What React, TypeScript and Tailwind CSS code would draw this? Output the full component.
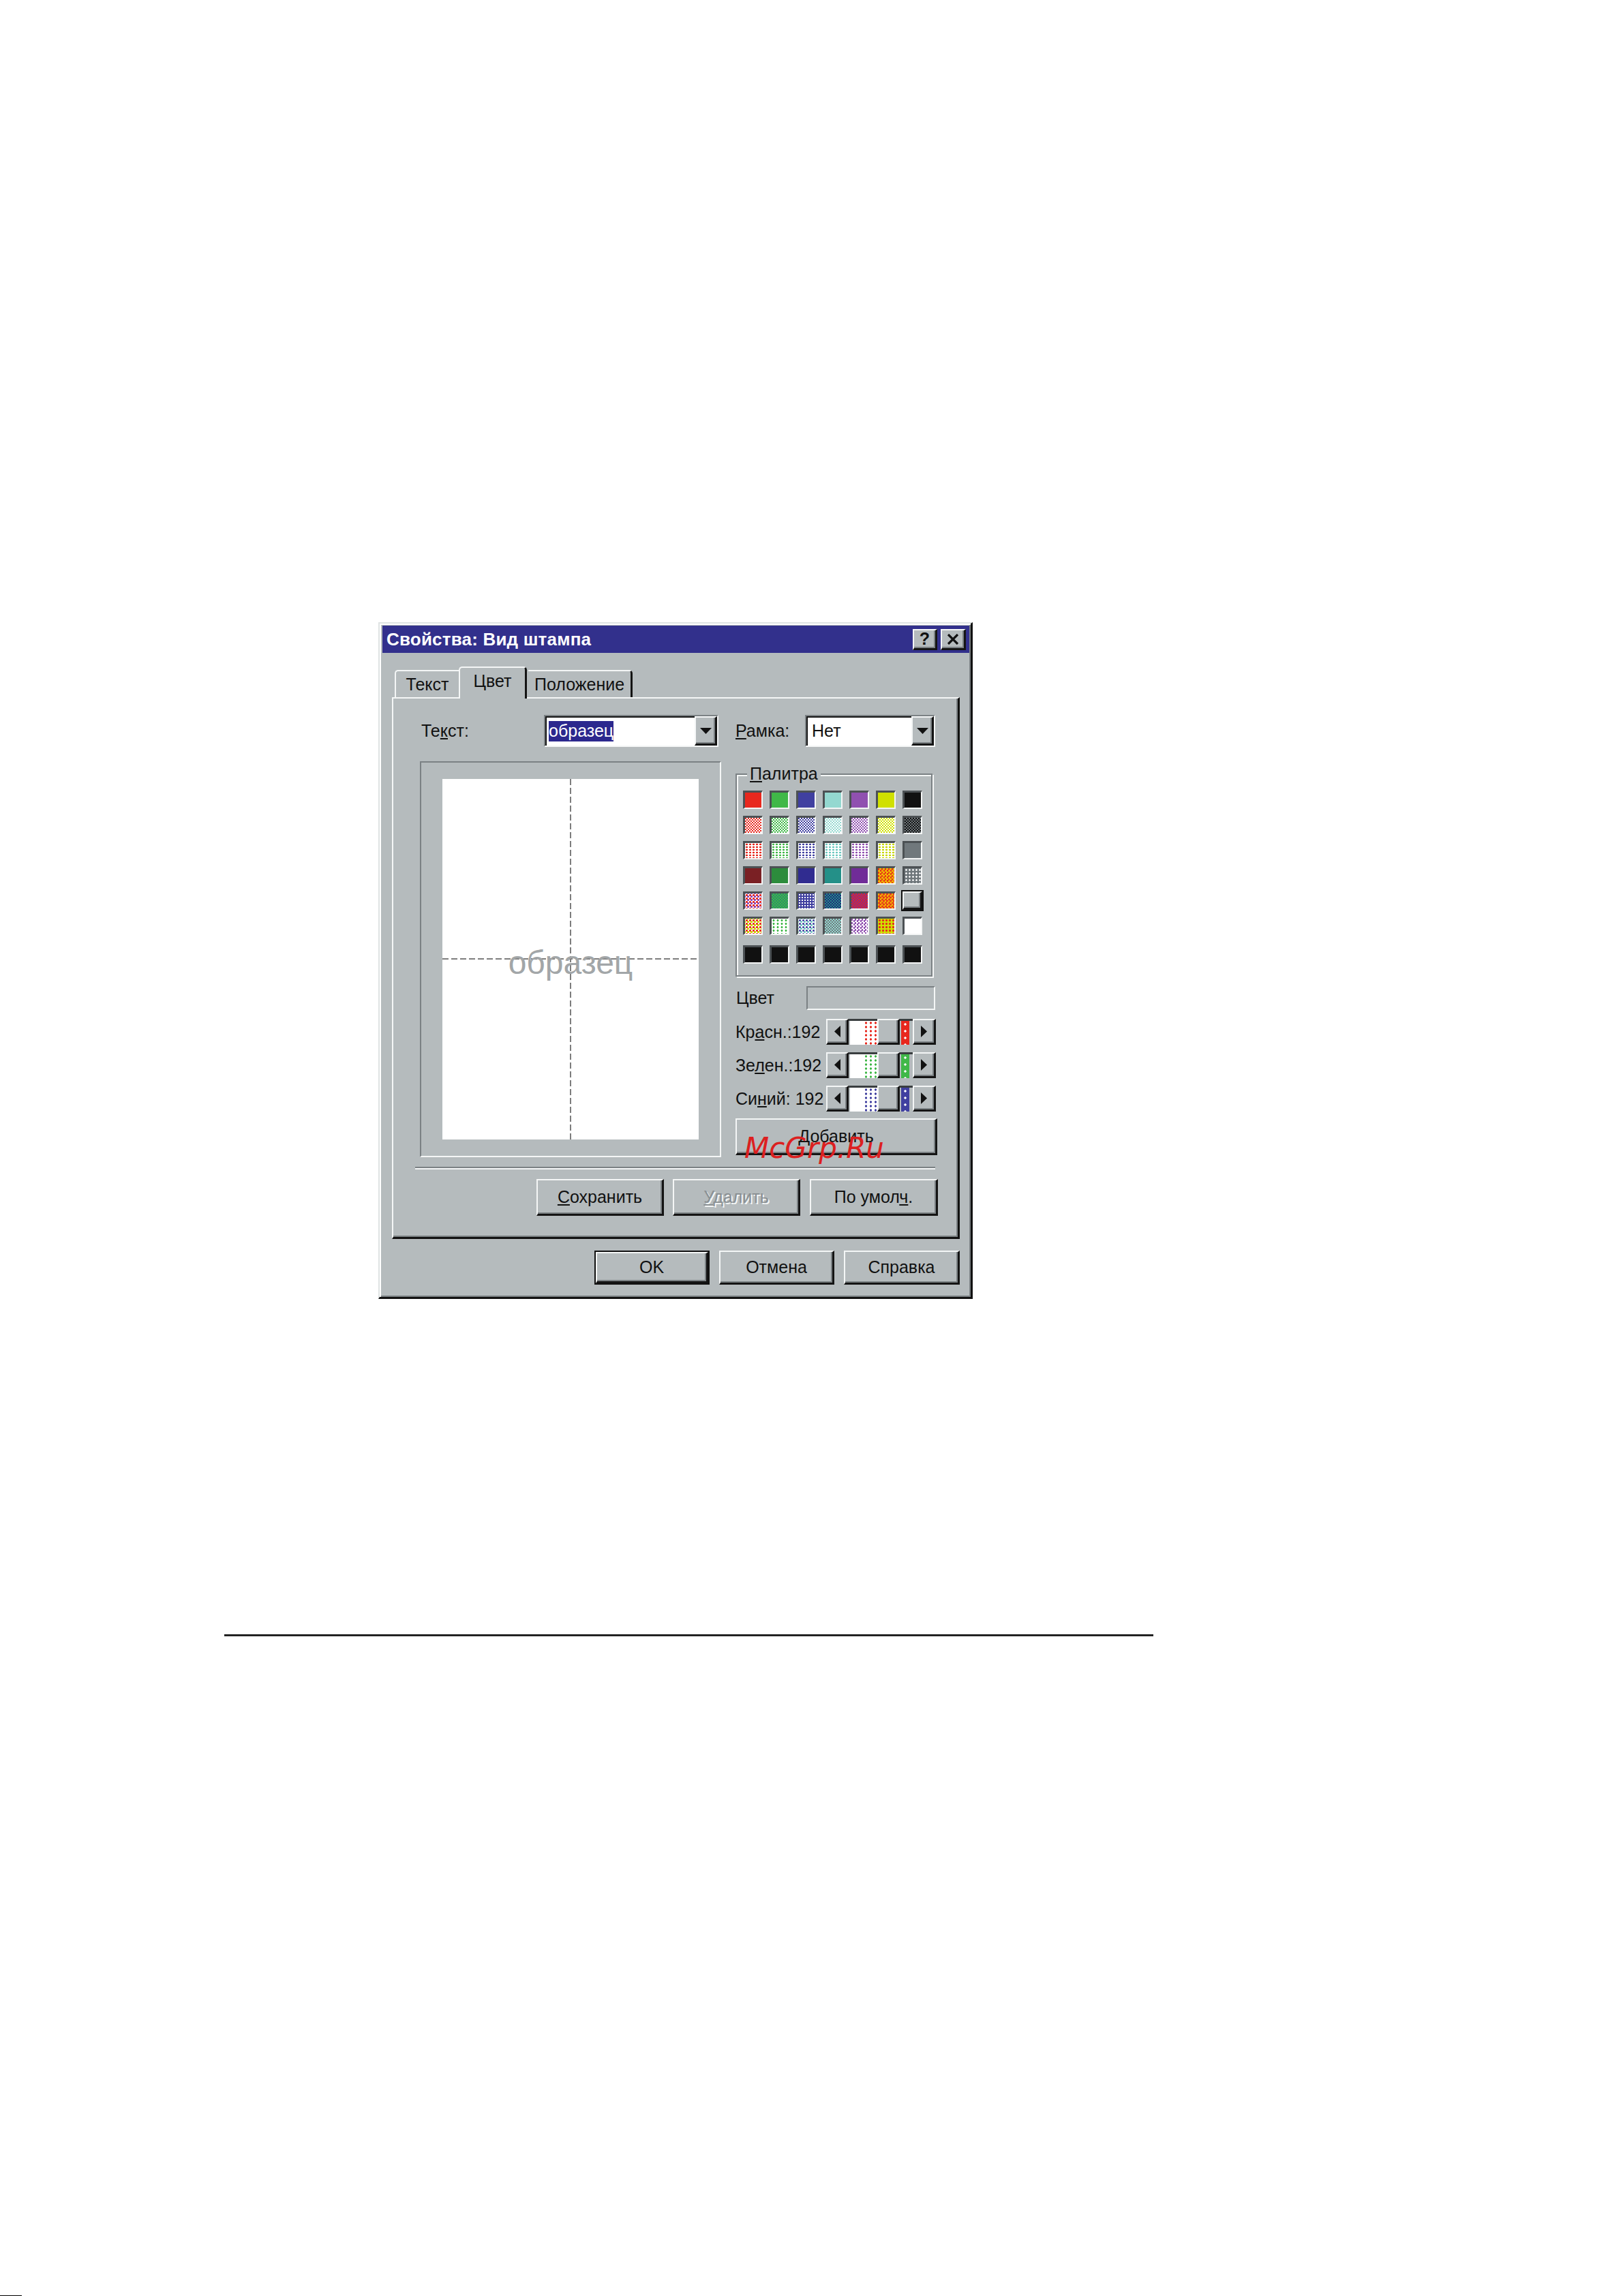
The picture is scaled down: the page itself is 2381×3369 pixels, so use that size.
import React from "react";

const raised =
  "bg-[#b5bbbd] border-t-2 border-l-2 border-r-[3px] border-b-[3px] border-t-[#f4f6f6] border-l-[#f4f6f6] border-r-[#141414] border-b-[#141414] shadow-[inset_-2px_-2px_0_#7b8184]";
const sunken =
  "border-2 border-t-[#7b8184] border-l-[#7b8184] border-r-[#f4f6f6] border-b-[#f4f6f6] shadow-[inset_2px_2px_0_#141414]";
const swatchBase =
  "h-[27px] w-[29px] border-t-[3px] border-l-[3px] border-r-2 border-b-2 border-t-[#4c5154] border-l-[#4c5154] border-r-[#f4f6f6] border-b-[#f4f6f6]";

const PALETTE: string[][] = [
  ["bg-[#e8281e]", "bg-[#40b848]", "bg-[#4040a0]", "bg-[#94d8d0]", "bg-[#9050b0]", "bg-[#d0e000]", "bg-[#111111]"],
  [
    "bg-[#e8281e] bg-[conic-gradient(#ffffff_25%,transparent_0_50%,#ffffff_0_75%,transparent_0)] bg-[length:4px_4px]",
    "bg-[#40b848] bg-[conic-gradient(#ffffff_25%,transparent_0_50%,#ffffff_0_75%,transparent_0)] bg-[length:4px_4px]",
    "bg-[#4040a0] bg-[conic-gradient(#ffffff_25%,transparent_0_50%,#ffffff_0_75%,transparent_0)] bg-[length:4px_4px]",
    "bg-[#94d8d0] bg-[conic-gradient(#ffffff_25%,transparent_0_50%,#ffffff_0_75%,transparent_0)] bg-[length:4px_4px]",
    "bg-[#9050b0] bg-[conic-gradient(#ffffff_25%,transparent_0_50%,#ffffff_0_75%,transparent_0)] bg-[length:4px_4px]",
    "bg-[#d0e000] bg-[conic-gradient(#ffffff_25%,transparent_0_50%,#ffffff_0_75%,transparent_0)] bg-[length:4px_4px]",
    "bg-[#111111] bg-[conic-gradient(#70787c_25%,transparent_0_50%,#70787c_0_75%,transparent_0)] bg-[length:4px_4px]",
  ],
  [
    "bg-white bg-[radial-gradient(circle,#e8281e_1.2px,transparent_1.6px)] bg-[length:5px_4px]",
    "bg-white bg-[radial-gradient(circle,#40b848_1.2px,transparent_1.6px)] bg-[length:5px_4px]",
    "bg-white bg-[radial-gradient(circle,#4040a0_1.2px,transparent_1.6px)] bg-[length:5px_4px]",
    "bg-white bg-[radial-gradient(circle,#6cc8c0_1.2px,transparent_1.6px)] bg-[length:5px_4px]",
    "bg-white bg-[radial-gradient(circle,#9050b0_1.2px,transparent_1.6px)] bg-[length:5px_4px]",
    "bg-white bg-[radial-gradient(circle,#c8d800_1.2px,transparent_1.6px)] bg-[length:5px_4px]",
    "bg-[#70787c]",
  ],
  [
    "bg-[#7a2024]",
    "bg-[#2c8c3c]",
    "bg-[#302c90]",
    "bg-[#249088]",
    "bg-[#702c98]",
    "bg-[#e83a18] bg-[conic-gradient(#f0c000_25%,transparent_0_50%,#f0c000_0_75%,transparent_0)] bg-[length:5px_5px]",
    "bg-[#70787c] bg-[radial-gradient(circle,#ffffff_1px,transparent_1.5px)] bg-[length:5px_5px]",
  ],
  [
    "bg-white bg-[radial-gradient(circle,#e8281e_1.3px,transparent_1.7px),radial-gradient(circle,#8040c0_1.3px,transparent_1.7px)] bg-[length:5px_5px] bg-[position:0_0,2px_2px]",
    "bg-[#2c8c6c] bg-[conic-gradient(#40b848_25%,transparent_0_50%,#40b848_0_75%,transparent_0)] bg-[length:4px_4px]",
    "bg-[#4040a0] bg-[radial-gradient(circle,#ffffff_1.1px,transparent_1.5px)] bg-[length:4px_4px]",
    "bg-[#20287c] bg-[conic-gradient(#249088_25%,transparent_0_50%,#249088_0_75%,transparent_0)] bg-[length:4px_4px]",
    "bg-[#7a2c98] bg-[conic-gradient(#e8281e_25%,transparent_0_50%,#e8281e_0_75%,transparent_0)] bg-[length:4px_4px]",
    "bg-[#f0b000] bg-[conic-gradient(#e8381e_25%,transparent_0_50%,#e8381e_0_75%,transparent_0)] bg-[length:5px_5px]",
    "sel",
  ],
  [
    "bg-white bg-[radial-gradient(circle,#e8281e_1.3px,transparent_1.7px),radial-gradient(circle,#d0e000_1.5px,transparent_1.9px)] bg-[length:5px_5px] bg-[position:0_0,2px_2px]",
    "bg-white bg-[radial-gradient(circle,#40b848_1.3px,transparent_1.7px)] bg-[length:6px_5px]",
    "bg-white bg-[radial-gradient(circle,#4040a0_1.2px,transparent_1.6px),radial-gradient(circle,#6cc8c0_1.2px,transparent_1.6px)] bg-[length:5px_5px] bg-[position:0_0,2px_2px]",
    "bg-[#94d8d0] bg-[conic-gradient(#70787c_25%,transparent_0_50%,#70787c_0_75%,transparent_0)] bg-[length:4px_4px]",
    "bg-[#9050b0] bg-[conic-gradient(#ffffff_25%,transparent_0_50%,#ffffff_0_75%,transparent_0)] bg-[length:5px_5px]",
    "bg-[#d0e000] bg-[radial-gradient(circle,#e8281e_1.3px,transparent_1.7px)] bg-[length:5px_5px]",
    "bg-white",
  ],
];

const SLIDERS = [
  {
    label: (
      <>
        Кр<u>а</u>сн.:192
      </>
    ),
    dots: "bg-white bg-[radial-gradient(circle,#e8281e_1.4px,transparent_1.9px)] bg-[length:7px_6px]",
    strip: "bg-[#e8281e] bg-[radial-gradient(circle,#ffffff_1.4px,transparent_1.9px)] bg-[length:12px_10px]",
  },
  {
    label: (
      <>
        Зе<u>л</u>ен.:192
      </>
    ),
    dots: "bg-white bg-[radial-gradient(circle,#40b848_1.4px,transparent_1.9px)] bg-[length:7px_6px]",
    strip: "bg-[#40b848] bg-[radial-gradient(circle,#ffffff_1.4px,transparent_1.9px)] bg-[length:12px_10px]",
  },
  {
    label: (
      <>
        Си<u>н</u>ий: 192
      </>
    ),
    dots: "bg-white bg-[radial-gradient(circle,#4040a0_1.4px,transparent_1.9px)] bg-[length:7px_6px]",
    strip: "bg-[#4040a0] bg-[radial-gradient(circle,#ffffff_1.4px,transparent_1.9px)] bg-[length:12px_10px]",
  },
];

function Arrow({ dir }: { dir: "left" | "right" | "down" }) {
  if (dir === "down") {
    return (
      <svg width="17" height="9" viewBox="0 0 17 9">
        <polygon points="0,0 17,0 8.5,9" fill="#111" />
      </svg>
    );
  }
  return (
    <svg width="9" height="17" viewBox="0 0 9 17">
      <polygon points={dir === "left" ? "9,0 9,17 0,8.5" : "0,0 0,17 9,8.5"} fill="#111" />
    </svg>
  );
}

function Combo({ width, children }: { width: string; children: React.ReactNode }) {
  return (
    <div className={`${sunken} ${width} flex h-[47px] bg-white`}>
      <div className="flex flex-1 items-center pl-[5px]">{children}</div>
      <div className={`${raised} flex w-[33px] items-center justify-center`}>
        <Arrow dir="down" />
      </div>
    </div>
  );
}

function ColorSlider({ label, dots, strip }: { label: React.ReactNode; dots: string; strip: string }) {
  return (
    <div className="flex h-[38px] items-center">
      <span className="w-[133px] whitespace-nowrap">{label}</span>
      <div className="flex h-[38px] w-[161px]">
        <div className={`${raised} flex w-[33px] items-center justify-center`}>
          <Arrow dir="left" />
        </div>
        <div className="flex flex-1 border-t-[3px] border-t-[#3a3e40] bg-[#b5bbbd] pl-[2px]">
          <div className="flex w-[40px] bg-white">
            <div className="flex-1" />
            <div className={`w-[20px] ${dots}`} />
          </div>
          <div className={`${raised} -mt-[3px] w-[33px]`} />
          <div className={`ml-[2px] w-[12px] ${strip}`} />
        </div>
        <div className={`${raised} flex w-[34px] items-center justify-center`}>
          <Arrow dir="right" />
        </div>
      </div>
    </div>
  );
}

function Swatch({ fill }: { fill: string }) {
  if (fill === "sel") {
    return (
      <div className="-m-[2px] border-2 border-[#111]">
        <div className={`${raised} h-[27px] w-[29px]`} />
      </div>
    );
  }
  return <div className={`${swatchBase} ${fill}`} />;
}

export default function App() {
  return (
    <div className="relative flex min-h-[3369px] w-[2381px] flex-col bg-white font-['Liberation_Sans',Arial,sans-serif] text-[25px] leading-none text-[#111]">
      {/* dialog */}
      <div className="ml-[555px] mt-[913px] flex h-[993px] w-[872px] shrink-0 flex-col border-t-2 border-l-2 border-r-[3px] border-b-[3px] border-t-[#dfe3e3] border-l-[#dfe3e3] border-r-[#111] border-b-[#111] bg-[#b5bbbd] pl-[4px] pr-[2px] pt-[3px] shadow-[inset_2px_2px_0_#ffffff,inset_-2px_-2px_0_#7b8184]">
        <div className="flex h-[40px] items-center bg-[#32308c] pl-[6px] pr-[5px]">
          <span className="flex-1 text-[26px] font-bold tracking-[0.2px] text-white">Свойства: Вид штампа</span>
          <div className={`${raised} flex h-[31px] w-[36px] items-center justify-center text-[25px] font-bold`}>?</div>
          <div className={`${raised} ml-[5px] flex h-[31px] w-[37px] items-center justify-center`}>
            <svg width="18" height="16" viewBox="0 0 18 16">
              <path d="M2 1 L16 15 M16 1 L2 15" stroke="#111" strokeWidth="3.2" />
            </svg>
          </div>
        </div>

        <div className="mx-[14px] flex flex-col">
          {/* tabs */}
          <div className="ml-[4px] mt-[20px] flex items-end">
            <div className="flex h-[40px] w-[94px] items-center justify-center rounded-tl-[5px] border-t-2 border-l-2 border-t-[#f4f6f6] border-l-[#f4f6f6]">
              Текст
            </div>
            <div className="relative z-10 -mb-[2px] flex h-[47px] w-[100px] items-center justify-center rounded-t-[5px] border-t-2 border-l-2 border-r-[3px] border-t-[#f4f6f6] border-l-[#f4f6f6] border-r-[#141414] bg-[#b5bbbd] pb-[6px]">
              Цвет
            </div>
            <div className="ml-[2px] flex h-[40px] w-[153px] items-center justify-center rounded-tr-[5px] border-t-2 border-r-[3px] border-t-[#f4f6f6] border-r-[#141414]">
              Положение
            </div>
          </div>

          {/* panel */}
          <div className="flex h-[795px] flex-col border-t-2 border-l-2 border-r-[3px] border-b-[3px] border-t-[#f4f6f6] border-l-[#f4f6f6] border-r-[#111] border-b-[#111] pl-[32px] pt-[24px] shadow-[inset_-2px_-2px_0_#7b8184]">
            <div className="flex h-[47px] items-center">
              <span className="ml-[9px] w-[180px]">
                Те<u>к</u>ст:
              </span>
              <Combo width="w-[256px]">
                <span className="flex h-[30px] items-center bg-[#2c288e] text-white">образец</span>
              </Combo>
              <span className="ml-[25px] w-[102px]">
                <u>Р</u>амка:
              </span>
              <Combo width="w-[191px]">
                <span className="pl-[3px]">Нет</span>
              </Combo>
            </div>

            <div className="mt-[21px] flex">
              {/* preview */}
              <div className="ml-[7px] flex h-[581px] w-[442px] items-center justify-center border-2 border-t-[#7b8184] border-l-[#7b8184] border-r-[#f4f6f6] border-b-[#f4f6f6]">
                <div className="relative h-[529px] w-[376px] bg-white">
                  <div className="absolute bottom-0 left-[187px] top-0 w-[2px] bg-[repeating-linear-gradient(to_bottom,#7d7d7d_0_9px,transparent_9px_13px)]" />
                  <div className="absolute left-0 right-0 top-[263px] h-[2px] bg-[repeating-linear-gradient(to_right,#7d7d7d_0_9px,transparent_9px_13px)]" />
                  <div className="absolute inset-0 flex items-center justify-center pt-[10px] text-[48px] text-[#a2a6a8]">
                    образец
                  </div>
                </div>
              </div>

              {/* right column */}
              <div className="ml-[21px] flex w-[296px] flex-col">
                <div className="relative mt-[18px] h-[298px] w-[289px] border-2 border-[#7b8184] pl-[9px] pt-[23px] shadow-[inset_2px_2px_0_#f4f6f6,2px_2px_0_#f4f6f6]">
                  <span className="absolute -top-[14px] left-[15px] bg-[#b5bbbd] px-[4px]">
                    <u>П</u>алитра
                  </span>
                  <div className="grid grid-cols-[repeat(7,29px)] gap-x-[10px] gap-y-[10px]">
                    {PALETTE.flat().map((fill, i) => (
                      <Swatch key={i} fill={fill} />
                    ))}
                  </div>
                  <div className="mt-[15px] grid grid-cols-[repeat(7,29px)] gap-x-[10px]">
                    {Array.from({ length: 7 }).map((_, i) => (
                      <Swatch key={i} fill="bg-[#111111]" />
                    ))}
                  </div>
                </div>

                <div className="mt-[14px] flex h-[35px] items-center">
                  <span className="w-[104px] pl-[1px]">Цвет</span>
                  <div className="h-[35px] w-[189px] border-2 border-t-[#7b8184] border-l-[#7b8184] border-r-[#f4f6f6] border-b-[#f4f6f6]" />
                </div>

                <div className="mt-[13px] flex flex-col gap-[11px]">
                  {SLIDERS.map((s, i) => (
                    <ColorSlider key={i} label={s.label} dots={s.dots} strip={s.strip} />
                  ))}
                </div>

                <div className={`${raised} mt-[10px] flex h-[54px] w-[296px] items-center justify-center`}>
                  Добавить
                </div>
              </div>
            </div>

            <div className="mt-[14px] h-[4px] w-[763px] border-t-2 border-b-2 border-t-[#7b8184] border-b-[#f4f6f6]" />

            <div className="ml-[178px] mt-[14px] flex gap-[13px]">
              <div className={`${raised} flex h-[54px] w-[187px] items-center justify-center`}>
                <span>
                  <u>С</u>охранить
                </span>
              </div>
              <div className={`${raised} flex h-[54px] w-[187px] items-center justify-center text-[#8a9093] [text-shadow:2px_2px_0_#f4f6f6]`}>
                <span>
                  <u>У</u>далить
                </span>
              </div>
              <div className={`${raised} ml-[1px] flex h-[54px] w-[188px] items-center justify-center`}>
                <span>
                  По умол<u>ч</u>.
                </span>
              </div>
            </div>
          </div>

          {/* dialog buttons */}
          <div className="mt-[17px] flex justify-end gap-[14px]">
            <div className="h-[50px] w-[169px] border-2 border-[#111]">
              <div className={`${raised} flex h-full items-center justify-center`}>OK</div>
            </div>
            <div className={`${raised} flex h-[50px] w-[169px] items-center justify-center`}>Отмена</div>
            <div className={`${raised} flex h-[50px] w-[170px] items-center justify-center`}>Справка</div>
          </div>
        </div>
      </div>

      <div className="ml-[329px] mt-[492px] h-[3px] w-[1363px] bg-[#222]" />
      <div className="mt-auto h-px w-[32px] bg-black" />

      <div className="absolute left-[1092px] top-[1664px] font-['DejaVu_Sans',sans-serif] text-[42px] italic leading-none text-[#dc2020]">
        McGrp.Ru
      </div>
    </div>
  );
}
